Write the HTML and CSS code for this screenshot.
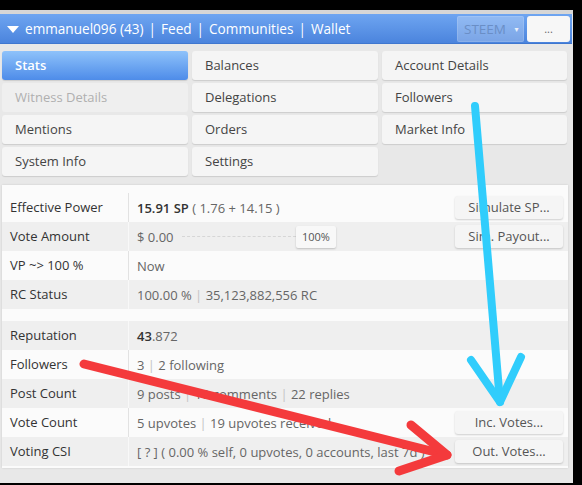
FILE: index.html
```html
<!DOCTYPE html>
<html>
<head>
<meta charset="utf-8">
<link rel="stylesheet" href="styles.css">
</head>
<body>
<div class="screen">
  <div class="header">
    <div class="nav">
      <span class="caret"></span>
      <span class="nav-item">emmanuel096 (43)</span>
      <span class="sep">|</span>
      <span class="nav-item">Feed</span>
      <span class="sep">|</span>
      <span class="nav-item">Communities</span>
      <span class="sep">|</span>
      <span class="nav-item">Wallet</span>
    </div>
    <div class="tools">
      <div class="select">STEEM <span class="mini-caret">▾</span></div>
      <div class="more">...</div>
    </div>
  </div>

  <div class="tabs">
    <div class="tab active">Stats</div>
    <div class="tab">Balances</div>
    <div class="tab">Account Details</div>
    <div class="tab disabled">Witness Details</div>
    <div class="tab">Delegations</div>
    <div class="tab">Followers</div>
    <div class="tab">Mentions</div>
    <div class="tab">Orders</div>
    <div class="tab">Market Info</div>
    <div class="tab">System Info</div>
    <div class="tab">Settings</div>
  </div>

  <div class="panel">
    <div class="row">
      <div class="label">Effective Power</div>
      <div class="value"><b>15.91 SP</b> ( 1.76 + 14.15 )</div>
      <div class="btn">Simulate SP...</div>
    </div>
    <div class="row alt">
      <div class="label">Vote Amount</div>
      <div class="value">$ 0.00 <span class="slider"></span><span class="pct">100%</span></div>
      <div class="btn">Sim. Payout...</div>
    </div>
    <div class="row">
      <div class="label">VP ~&gt; 100 %</div>
      <div class="value">Now</div>
    </div>
    <div class="row alt">
      <div class="label">RC Status</div>
      <div class="value">100.00 % <span class="bar">|</span> 35,123,882,556 RC</div>
    </div>
    <div class="spacer"></div>
    <div class="row alt">
      <div class="label">Reputation</div>
      <div class="value"><b>43</b>.872</div>
    </div>
    <div class="row">
      <div class="label">Followers</div>
      <div class="value">3 <span class="bar">|</span> 2 following</div>
    </div>
    <div class="row alt">
      <div class="label">Post Count</div>
      <div class="value">9 posts <span class="bar">|</span> 10 comments <span class="bar">|</span> 22 replies</div>
    </div>
    <div class="row">
      <div class="label">Vote Count</div>
      <div class="value">5 upvotes <span class="bar">|</span> 19 upvotes received</div>
      <div class="btn">Inc. Votes...</div>
    </div>
    <div class="row alt">
      <div class="label">Voting CSI</div>
      <div class="value">[ ? ] ( 0.00 % self, 0 upvotes, 0 accounts, last 7d )</div>
      <div class="btn">Out. Votes...</div>
    </div>
  </div>

  <svg class="arrows" width="573" height="473" viewBox="0 10 573 473">
    <g fill="none" stroke="#30cdfc" stroke-width="8" stroke-linecap="round" stroke-linejoin="round">
      <path d="M475 106 L500 402"/>
      <path d="M471 360 L500 402 L521 357"/>
    </g>
    <g fill="none" stroke="#f43a3c" stroke-width="9" stroke-linecap="round" stroke-linejoin="round">
      <path d="M84 364 L447 455"/>
      <path d="M411 425 L447 455 L399 471"/>
    </g>
  </svg>
</div>
</body>
</html>
```

FILE: styles.css
```css
html, body {
  margin: 0;
  padding: 0;
  background: #000;
}
body {
  width: 582px;
  height: 485px;
  overflow: hidden;
  font-family: "Open Sans", "DejaVu Sans", sans-serif;
}
.screen {
  position: relative;
  width: 573px;
  height: 473px;
  margin-top: 10px;
  background: #e8e8e8;
  overflow: hidden;
  padding-top: 4px;
  box-sizing: border-box;
}
.screen::before {
  content: "";
  position: absolute;
  left: 0; right: 0; top: 0;
  height: 4px;
  background: #d6d6d6;
}
.header {
  height: 29px;
  margin-right: 1px;
  background: linear-gradient(#6ea5f1, #4b84dd);
  display: flex;
  align-items: center;
  justify-content: space-between;
  color: #fff;
  font-size: 13.6px;
  border-bottom: 1px solid #3f77cf;
}
.nav {
  display: flex;
  align-items: center;
  padding-left: 7px;
}
.caret {
  width: 0; height: 0;
  border-left: 6px solid transparent;
  border-right: 6px solid transparent;
  border-top: 7px solid #fff;
  margin-right: 6px;
  margin-top: 1px;
}
.sep {
  margin: 0 5px;
}
.tools {
  display: flex;
  align-items: center;
  gap: 3px;
  padding-right: 2px;
}
.select {
  width: 67px;
  height: 26px;
  box-sizing: border-box;
  background: rgba(255,255,255,0.26);
  border: 1px solid rgba(255,255,255,0.12);
  border-radius: 2px;
  color: #6a8ec6;
  font-size: 13.5px;
  line-height: 24px;
  padding-left: 6px;
}
.mini-caret {
  font-size: 8px;
  margin-left: 5px;
  vertical-align: 2px;
  color: #e8eefa;
}
.more {
  width: 43px;
  height: 26px;
  background: #f7f7f7;
  border-radius: 3px;
  color: #666;
  font-size: 11px;
  text-align: center;
  line-height: 26px;
}
.tabs {
  display: grid;
  grid-template-columns: 186px 186px 185px;
  column-gap: 4px;
  row-gap: 3px;
  padding: 7px 0 0 2px;
}
.tab {
  height: 29px;
  line-height: 29px;
  background: #f5f5f5;
  border-radius: 3px;
  box-shadow: 0 1px 1px rgba(0,0,0,0.12);
  padding-left: 13px;
  font-size: 13px;
  color: #444;
}
.tab.active {
  background: linear-gradient(#8ec2fa, #4e8ce9);
  color: #fff;
  font-weight: 600;
}
.tab.disabled {
  background: #efefef;
  color: #b0b0b0;
  box-shadow: none;
}
.panel {
  margin: 9px 5px 0 2px;
  background: #fbfbfb;
  padding: 8px 0 2px;
  box-shadow: 0 0 2px rgba(0,0,0,0.12);
}
.row {
  display: flex;
  align-items: center;
  height: 29px;
  font-size: 13px;
}
.row.alt {
  background: #efefef;
}
.label {
  width: 127px;
  box-sizing: border-box;
  padding-left: 8px;
  height: 100%;
  line-height: 29px;
  color: #333;
  border-right: 1px solid #e2e2e2;
}
.row.alt .label {
  border-right-color: #f8f8f8;
}
.value {
  flex: 1;
  padding-left: 8px;
  color: #666;
  display: flex;
  align-items: center;
  white-space: pre;
}
.value b {
  color: #333;
  font-weight: 600;
}
.bar {
  color: #c4c4c4;
}
.slider {
  width: 114px;
  border-top: 1px dashed #d6d6d6;
  margin-left: 5px;
}
.pct {
  font-size: 11px;
  color: #555;
  background: #f8f8f8;
  border-radius: 2px;
  box-shadow: 0 1px 2px rgba(0,0,0,0.2);
  width: 40px;
  height: 22px;
  line-height: 22px;
  text-align: center;
}
.btn {
  width: 108px;
  height: 23px;
  line-height: 23px;
  margin-right: 5px;
  text-align: center;
  background: #f5f5f5;
  border-radius: 3px;
  box-shadow: 0 1px 2px rgba(0,0,0,0.18);
  color: #555;
  font-size: 13px;
}
.spacer {
  height: 12px;
}
.arrows {
  position: absolute;
  left: 0;
  top: 0;
  pointer-events: none;
}
```
